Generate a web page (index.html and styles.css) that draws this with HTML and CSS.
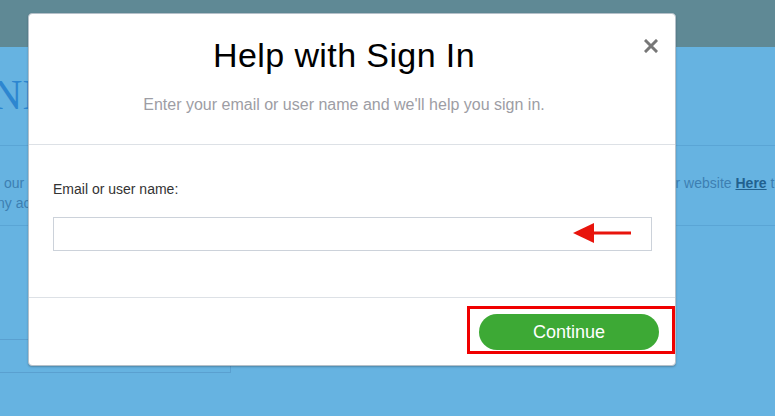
FILE: index.html
```html
<!DOCTYPE html>
<html lang="en">
<head>
<meta charset="utf-8">
<title>Help with Sign In</title>
<link rel="stylesheet" href="styles.css">
</head>
<body>
<div class="page">
  <header class="topbar"></header>
  <section class="hero">
    <h1 class="hero-title">NITED ONLINE</h1>
  </section>
  <section class="info">
    <div class="info-left">
      <div class="info-line first">our support site to learn more</div>
      <div class="info-line second">ny account questions you may have</div>
    </div>
    <div class="info-right">
      <div class="info-line first">our website <a class="info-link" href="#">Here</a> to</div>
    </div>
  </section>
  <section class="spacer"></section>
  <section class="boxrow"></section>
</div>

<div class="modal">
  <button class="modal-close" aria-label="Close">
    <svg width="14" height="14" viewBox="0 0 14 14"><path d="M2 2 L12 12 M12 2 L2 12" stroke="#777" stroke-width="3" stroke-linecap="square"/></svg>
  </button>
  <div class="modal-header">
    <h2 class="modal-title">Help with Sign In</h2>
    <p class="modal-subtitle">Enter your email or user name and we'll help you sign in.</p>
  </div>
  <div class="modal-body">
    <label class="field-label" for="user">Email or user name:</label>
    <div class="field-wrap">
      <input class="field-input" id="user" type="text">
      <svg class="annot-arrow" width="60" height="22" viewBox="0 0 60 22"><path d="M20 9.5 L58 9.5 L58 12.5 L20 12.5 Z" fill="#e8140c"/><path d="M0 11 L21 1 L21 21 Z" fill="#e8140c"/></svg>
    </div>
  </div>
  <div class="modal-footer">
    <div class="btn-wrap">
      <button class="btn-continue">Continue</button>
      <span class="annot-box"></span>
    </div>
  </div>
</div>
</body>
</html>
```

FILE: styles.css
```css
html, body {
  margin: 0;
  padding: 0;
}
body {
  width: 775px;
  height: 416px;
  overflow: hidden;
  background: #66b3e1;
  font-family: "Liberation Sans", Arial, sans-serif;
  position: relative;
}
.page {
  display: flex;
  flex-direction: column;
}
.topbar {
  height: 47px;
  background: #5f8995;
}
.hero {
  height: 98px;
  border-bottom: 1px solid #5aa5d5;
  overflow: hidden;
}
.hero-title {
  margin: 24px 0 0 -8px;
  font-family: "Liberation Serif", "Times New Roman", serif;
  font-weight: normal;
  font-size: 42px;
  line-height: 48px;
  color: #2d86d0;
  white-space: nowrap;
}
.info {
  height: 79px;
  border-bottom: 1px solid #5aa5d5;
  display: flex;
  justify-content: space-between;
  font-size: 14px;
  color: #3d7fb2;
  white-space: nowrap;
  overflow: hidden;
}
.info-left {
  padding-top: 27px;
  width: 200px;
}
.info-right {
  padding-top: 27px;
  width: 105px;
  overflow: hidden;
}
.info-line {
  line-height: 20px;
}
.info-left .first {
  margin-left: 4px;
}
.info-left .second {
  margin-left: -3px;
}
.info-right .first {
  margin-left: -10px;
}
.info-link {
  color: #21618f;
  font-weight: bold;
}
.spacer {
  height: 113px;
}
.boxrow {
  width: 230px;
  height: 32px;
  border-top: 1px solid #5aa0d0;
  border-bottom: 1px solid #5aa0d0;
  border-right: 1px solid #5aa0d0;
}

/* modal */
.modal {
  position: absolute;
  left: 28px;
  top: 13px;
  width: 648px;
  height: 353px;
  box-sizing: border-box;
  background: #fff;
  border: 1px solid #b5c0c9;
  border-radius: 4px;
  box-shadow: 0 1px 2px rgba(0,0,0,0.25);
  display: flex;
  flex-direction: column;
}
.modal-close {
  position: absolute;
  top: 25px;
  right: 17px;
  width: 14px;
  height: 14px;
  padding: 0;
  border: 0;
  background: none;
  display: flex;
}
.modal-header {
  height: 131px;
  flex: none;
  border-bottom: 1px solid #dde1e6;
  padding: 21px 16px 0 0;
  box-sizing: border-box;
  text-align: center;
}
.modal-title {
  margin: 0;
  font-weight: normal;
  font-size: 34px;
  line-height: 40px;
  letter-spacing: 0.4px;
  color: #000;
}
.modal-subtitle {
  margin: 20px 0 0;
  font-size: 16px;
  line-height: 20px;
  color: #9d9da4;
}
.modal-body {
  height: 153px;
  flex: none;
  box-sizing: border-box;
  border-bottom: 1px solid #dde1e6;
  padding: 35px 23px 0 24px;
  display: flex;
  flex-direction: column;
}
.field-label {
  font-size: 14px;
  line-height: 18px;
  color: #333;
}
.field-wrap {
  margin-top: 19px;
  position: relative;
}
.field-input {
  display: block;
  width: 100%;
  height: 34px;
  box-sizing: border-box;
  border: 1px solid #ccd2da;
  border-radius: 0;
  margin: 0;
  padding: 0 8px;
  font-family: inherit;
  font-size: 14px;
}
.annot-arrow {
  position: absolute;
  left: 520px;
  top: 5px;
}
.modal-footer {
  flex: 1;
  display: flex;
  justify-content: flex-end;
  align-items: flex-start;
  padding: 16px 16px 0 0;
}
.btn-wrap {
  position: relative;
}
.btn-continue {
  display: block;
  width: 180px;
  height: 36px;
  border: 0;
  border-radius: 18px;
  background: #3da935;
  color: #fff;
  font-family: "Liberation Sans", Arial, sans-serif;
  font-size: 18px;
  padding: 0;
}
.annot-box {
  position: absolute;
  left: -12px;
  top: -8px;
  right: -16px;
  bottom: -4px;
  border: 3px solid #f00000;
}
```
